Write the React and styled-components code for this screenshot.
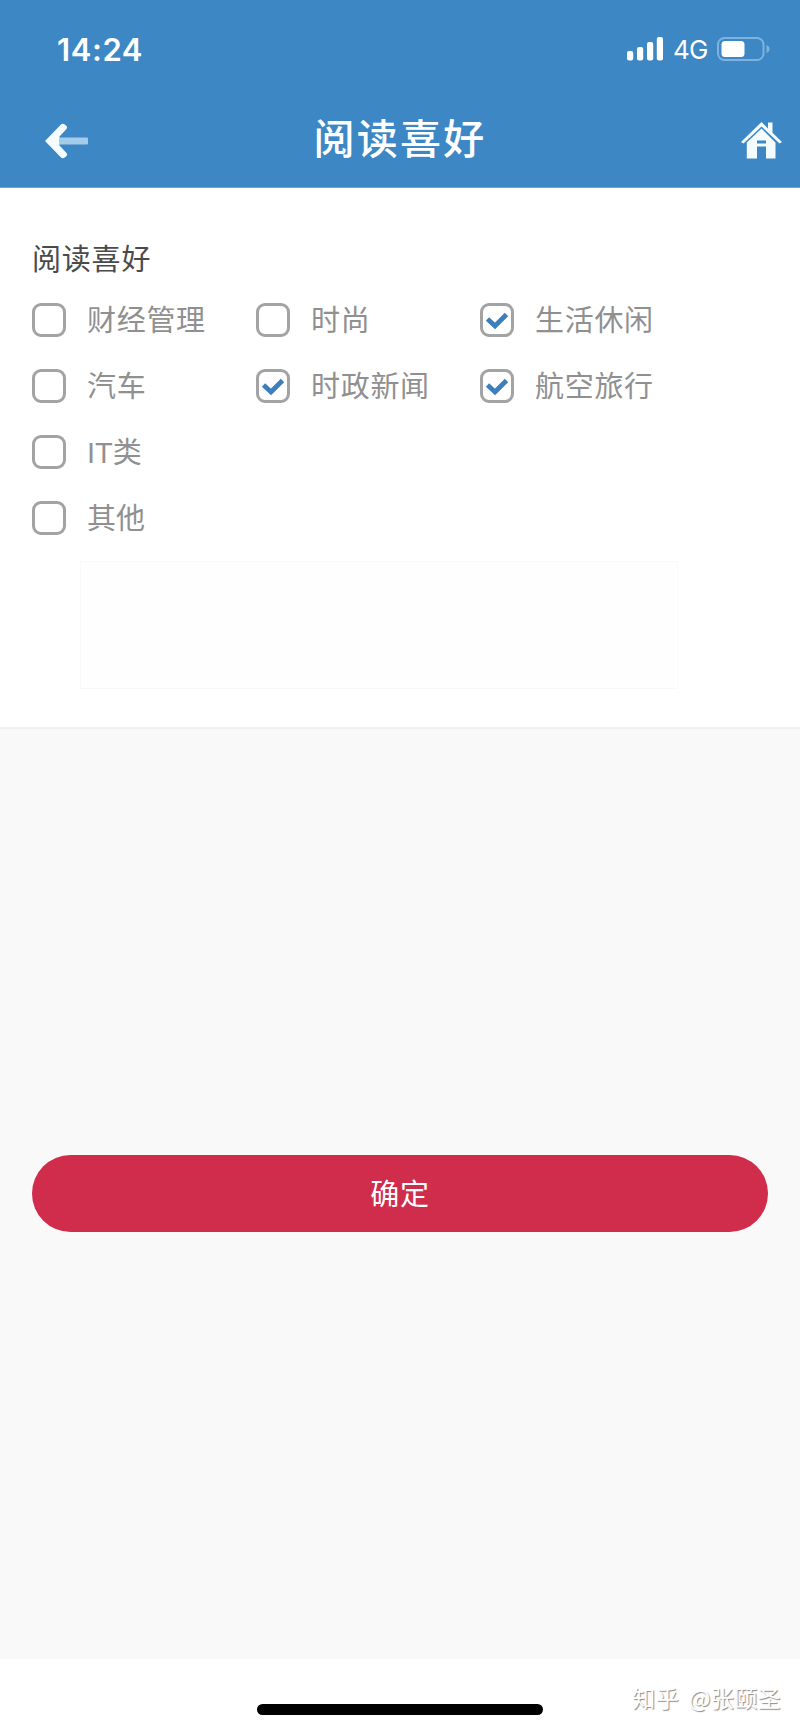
import React, { useState } from 'react';
import styled, { createGlobalStyle } from 'styled-components';

const GlobalStyle = createGlobalStyle`
  * {
    box-sizing: border-box;
  }

  body {
    margin: 0;
    background: #f9f9f9;
    font-family: 'Noto Sans CJK SC', sans-serif;
  }
`;
const Page = styled.div`
  display: flex;
  flex-direction: column;
  width: 800px;
  height: 1732px;
  overflow: hidden;
`;
const Header = styled.header`
  height: 188px;
  background: #3c87c4;
  border-bottom: 1px solid #6fa5d3;
  color: #fff;
`;
const StatusBar = styled.div`
  display: flex;
  justify-content: space-between;
  align-items: center;
  height: 98px;
  padding: 0 30px 0 57px;
`;
const Time = styled.span`
  font-family: Inter, sans-serif;
  font-weight: 600;
  font-size: 31px;
  letter-spacing: 0.6px;
`;
const StatusIcons = styled.div`
  display: flex;
  align-items: center;
`;
const Network = styled.span`
  width: 34px;
  margin: 2px 10px 0 10px;
  font-family: Inter, sans-serif;
  font-size: 26px;
  line-height: 30px;
  letter-spacing: -0.8px;
`;
const NavBar = styled.div`
  display: grid;
  grid-template-columns: 100px 1fr 100px;
  align-items: center;
  height: 84px;
`;
const NavButton = styled.button`
  display: flex;
  justify-content: ${({ $end }) => ($end ? 'flex-end' : 'flex-start')};
  padding: ${({ $end }) => ($end ? '0 18px 0 0' : '2px 0 0 43px')};
  border: none;
  background: none;
  cursor: pointer;
`;
const Title = styled.h1`
  margin: 0 0 8px;
  font-weight: 500;
  font-size: 41px;
  line-height: 60px;
  letter-spacing: 2.2px;
  text-align: center;
`;
const Card = styled.section`
  height: 541px;
  padding: 47px 32px 0;
  background: #fff;
  border-bottom: 2px solid #efefef;
`;
const CardTitle = styled.h2`
  margin: 0;
  font-weight: 400;
  font-size: 29px;
  line-height: 44px;
  letter-spacing: 0.8px;
  color: #4a4a4a;
`;
const Options = styled.div`
  display: grid;
  grid-template-columns: repeat(3, 224px);
  grid-auto-rows: 66px;
  margin-top: 8px;
`;
const Option = styled.label`
  grid-column: ${({ $wide }) => ($wide ? '1 / -1' : 'auto')};
  display: flex;
  align-items: center;
  gap: 21px;
  cursor: pointer;
`;
const OptionName = styled.span`
  margin-top: 1px;
  font-family: 'Liberation Sans', 'Noto Sans CJK SC', sans-serif;
  font-weight: 400;
  font-size: 29px;
  line-height: 44px;
  letter-spacing: ${({ $wide }) => ($wide ? '0' : '0.7px')};
  color: #909090;
`;
const HiddenInput = styled.input`
  display: none;
`;
const Box = styled.span`
  display: flex;
  justify-content: center;
  align-items: center;
  width: 34px;
  height: 34px;
  border: 3px solid #a3a3a3;
  border-radius: 9px;
  background: #fff;
`;
const OtherText = styled.textarea`
  display: block;
  width: 598px;
  height: 128px;
  margin: 10px 0 0 48px;
  padding: 12px;
  border: 1px solid #f9f9f9;
  background: #fefefe;
  outline: none;
  resize: none;
  font: inherit;
  font-size: 28px;
`;
const Content = styled.main`
  flex: 1;
  padding: 426px 32px 0;
  background: #f9f9f9;
`;
const SubmitButton = styled.button`
  width: 100%;
  height: 77px;
  padding: 0 0 3px;
  border: none;
  border-radius: 39px;
  background: #d02c4b;
  color: #fff;
  font-family: inherit;
  font-weight: 400;
  font-size: 29px;
  letter-spacing: 0.7px;
  cursor: pointer;
`;
const Footer = styled.footer`
  display: grid;
  grid-template-columns: 1fr 286px 1fr;
  height: 73px;
  background: #fff;
`;
const HomeIndicator = styled.div`
  grid-column: 2;
  height: 11px;
  margin-top: 45px;
  border-radius: 6px;
  background: #000;
`;
const Watermark = styled.span`
  justify-self: end;
  margin: 20px 19px 0 0;
  font-size: 23px;
  line-height: 36px;
  word-spacing: 4px;
  letter-spacing: 0.4px;
  white-space: nowrap;
  color: #fff;
  text-shadow: 1px 1px 1px #888;
`;

const SignalIcon = () => (
  <svg width="36" height="24" viewBox="0 0 36 24" fill="#fff">
    <rect x="0" y="14" width="6.200" height="9.500" rx="2" />
    <rect x="10" y="10" width="6.200" height="13.500" rx="2" />
    <rect x="20" y="5" width="6.200" height="18.500" rx="2" />
    <rect x="29.800" y="0" width="6.200" height="23.500" rx="2" />
  </svg>
);

const BatteryIcon = () => (
  <svg width="53" height="24" viewBox="0 0 53 24">
    <rect x="1" y="1" width="45.500" height="22" rx="6.500" fill="none" stroke="#7db3de" strokeWidth="2" />
    <rect x="4.500" y="4" width="23" height="16" rx="3.500" fill="#fff" />
    <path d="M49.500 8c2 .7 3 2.200 3 4s-1 3.300-3 4z" fill="#7db3de" />
  </svg>
);

const BackIcon = () => (
  <svg width="46" height="38" viewBox="0 0 46 38">
    <rect x="14" y="15.500" width="31" height="7" rx="1" fill="#a3cbea" />
    <path
      d="M2 19 18 2.500Q20 .800 22 2.700L23.500 4Q25 5.500 23.500 7L16.500 14.500Q15.200 19 16.500 23.500L23.500 31Q25 32.500 23.500 34L22 35.300Q20 37.200 18 35.500Z"
      fill="#f4fcff"
    />
  </svg>
);

const HomeIcon = () => (
  <svg width="41" height="38" viewBox="0 0 41 38" fill="#f4fcff">
    <path d="M0 21 20.500 1 27 7.400V1.500H31.500V11.800L41 21 38.500 22.500 20.500 5.500 2.500 22.500Z" />
    <path
      fillRule="evenodd"
      d="M5.800 21.500 20.500 7.500 34.500 21.500V37.500H25V25.500H16V37.500H5.800ZM16 19.500V22.500H25V19.500Z"
    />
  </svg>
);

const CheckIcon = () => (
  <svg width="24" height="20" viewBox="0 0 24 20">
    <path d="M2.500 9 10 16 21.500 4.500" fill="none" stroke="#3c7fbe" strokeWidth="4.800" />
  </svg>
);

const options = [
  { name: '财经管理' },
  { name: '时尚' },
  { name: '生活休闲', checked: true },
  { name: '汽车' },
  { name: '时政新闻', checked: true },
  { name: '航空旅行', checked: true },
  { name: 'IT类', wide: true },
  { name: '其他', wide: true },
];

const CheckOption = ({ name, wide, defaultChecked }) => {
  const [checked, setChecked] = useState(defaultChecked);
  return (
    <Option $wide={wide}>
      <HiddenInput type="checkbox" checked={checked} onChange={() => setChecked(!checked)} />
      <Box>{checked && <CheckIcon />}</Box>
      <OptionName $wide={wide}>{name}</OptionName>
    </Option>
  );
};

const App = () => {
  return (
    <Page>
      <GlobalStyle />
      <Header>
        <StatusBar>
          <Time>14:24</Time>
          <StatusIcons>
            <SignalIcon />
            <Network>4G</Network>
            <BatteryIcon />
          </StatusIcons>
        </StatusBar>
        <NavBar>
          <NavButton>
            <BackIcon />
          </NavButton>
          <Title>阅读喜好</Title>
          <NavButton $end>
            <HomeIcon />
          </NavButton>
        </NavBar>
      </Header>
      <Card>
        <CardTitle>阅读喜好</CardTitle>
        <Options>
          {options.map(({ name, wide, checked }) => (
            <CheckOption key={name} name={name} wide={wide} defaultChecked={!!checked} />
          ))}
        </Options>
        <OtherText />
      </Card>
      <Content>
        <SubmitButton>确定</SubmitButton>
      </Content>
      <Footer>
        <HomeIndicator />
        <Watermark>知乎 @张颐圣</Watermark>
      </Footer>
    </Page>
  );
};

export default App;
